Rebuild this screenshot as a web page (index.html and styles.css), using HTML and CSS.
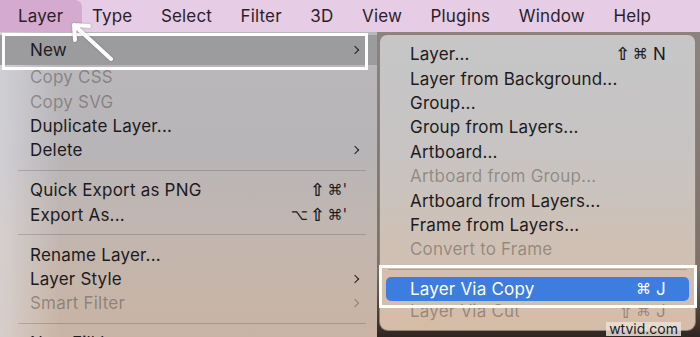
FILE: index.html
```html
<!DOCTYPE html>
<html lang="en">
<head>
    <meta charset="UTF-8">
    <meta name="viewport" content="width=device-width, initial-scale=1.0">
    <title>Layer &gt; New &gt; Layer Via Copy</title>
    <link rel="stylesheet" href="styles.css">
</head>
<body>
<div class="screen">

    <!-- Top menu bar -->
    <nav class="menubar">
        <div class="menubar-item open">Layer</div>
        <div class="menubar-item">Type</div>
        <div class="menubar-item">Select</div>
        <div class="menubar-item">Filter</div>
        <div class="menubar-item">3D</div>
        <div class="menubar-item">View</div>
        <div class="menubar-item">Plugins</div>
        <div class="menubar-item">Window</div>
        <div class="menubar-item">Help</div>
    </nav>

    <div class="menus">
        <!-- Layer menu -->
        <div class="menu main-menu">
            <div class="item item-new"><span>New</span><span></span><span class="chev"></span></div>
            <div class="item disabled"><span>Copy CSS</span></div>
            <div class="item disabled"><span>Copy SVG</span></div>
            <div class="item"><span>Duplicate Layer...</span></div>
            <div class="item"><span>Delete</span><span></span><span class="chev"></span></div>
            <div class="sep"></div>
            <div class="item"><span>Quick Export as PNG</span><span class="keys"><span class="shift">⇧</span>⌘'</span></div>
            <div class="item"><span>Export As...</span><span class="keys">⌥<span class="shift">⇧</span>⌘'</span></div>
            <div class="sep"></div>
            <div class="item"><span>Rename Layer...</span></div>
            <div class="item"><span>Layer Style</span><span></span><span class="chev"></span></div>
            <div class="item disabled"><span>Smart Filter</span><span></span><span class="chev"></span></div>
            <div class="sep"></div>
            <div class="item"><span>New Fill Layer</span><span></span><span class="chev"></span></div>
        </div>

        <!-- New submenu -->
        <div class="menu sub-menu">
            <div class="item"><span>Layer...</span><span class="keys"><span class="shift">⇧</span>⌘<span class="key-letter">N</span></span></div>
            <div class="item"><span>Layer from Background...</span></div>
            <div class="item"><span>Group...</span></div>
            <div class="item"><span>Group from Layers...</span></div>
            <div class="item"><span>Artboard...</span></div>
            <div class="item disabled"><span>Artboard from Group...</span></div>
            <div class="item"><span>Artboard from Layers...</span></div>
            <div class="item"><span>Frame from Layers...</span></div>
            <div class="item disabled"><span>Convert to Frame</span></div>
            <div class="sep"></div>
            <div class="item selected"><span>Layer Via Copy</span><span class="keys">⌘<span class="key-letter">J</span></span></div>
            <div class="item disabled last"><span>Layer Via Cut</span><span class="keys"><span class="shift">⇧</span>⌘<span class="key-letter">J</span></span></div>
        </div>
    </div>

    <!-- Tutorial annotations -->
    <div class="note note-new"></div>
    <div class="note note-copy"></div>
    <svg class="pointer" width="60" height="60" viewBox="0 0 60 60">
        <path d="M45 43 L8 9 M8 9 L9 24 M8 9 L23 10" stroke="#fff" stroke-width="4" stroke-linecap="round" stroke-linejoin="round" fill="none"/>
    </svg>
    <div class="watermark">wtvid.com</div>
</div>
</body>
</html>
```

FILE: styles.css
```css
/* Page */
body {
    margin: 0;
    font-family: Inter, "Liberation Sans", Arial, sans-serif;
    color: #1d1b1e;
}

.screen {
    width: 700px;
    height: 337px;
    overflow: hidden;
    position: relative;
    background: linear-gradient(180deg, #8f8680 0%, #7d7068 80%, #2f2520 100%);
}

/* Menu bar */
.menubar {
    display: flex;
    height: 32px;
    align-items: stretch;
    background: #e7cce5;
}
.menubar-item {
    display: flex;
    align-items: center;
    padding: 0 14.3px;
    font-size: 17px;
    letter-spacing: 0.15px;
    color: #2a1f29;
}
.menubar-item.open {
    background: #d4aad0;
    border-radius: 0 7px 7px 0;
    padding-left: 18px;
    padding-right: 19px;
    margin-right: -4.5px;
}

/* Menus */
.menus {
    display: flex;
    align-items: flex-start;
}
.menu {
    font-size: 17px;
    letter-spacing: 0.2px;
}
.main-menu {
    width: 377px;
    height: 305px;
    padding-top: 3px;
    box-sizing: border-box;
    background:
        linear-gradient(90deg, rgba(228, 228, 234, 0.55), rgba(228, 228, 234, 0) 60px),
        linear-gradient(180deg, #b9b8bb 0%, #b8b5b8 40%, #c2b6b0 65%, #c9b4a4 100%);
}
.sub-menu {
    width: 317px;
    height: 297px;
    margin: 2px 0 0 2px;
    padding-top: 7px;
    box-sizing: border-box;
    border-radius: 8px 8px 9px 9px;
    border: 1px solid rgba(60, 50, 45, 0.45);
    background: linear-gradient(180deg, #c6c6c7 0%, #c7c4c3 40%, #d0c0b3 75%, #d6bca7 100%);
}

.item {
    display: grid;
    grid-template-columns: 1fr auto 14px;
    align-items: center;
    height: 24.4px;
    padding: 0 16px 0 30px;
    white-space: nowrap;
}
.item-new {
    height: 30px;
    background: #9c9c9e;
}
.sub-menu .item {
    padding: 0 29px 0 30px;
    grid-template-columns: 1fr auto;
}
.sub-menu .item.selected {
    margin: 0 6px;
    padding: 0 23px 0 24px;
    border-radius: 5px;
    background: #3c7ddf;
    color: #fff;
}
.sub-menu .item.last {
    height: 21px;
    line-height: 19px;
}
.item.disabled {
    color: rgba(40, 30, 25, 0.36);
}

/* Keyboard shortcuts */
.keys {
    display: flex;
    align-items: center;
    gap: 2px;
    font-family: "DejaVu Sans", sans-serif;
    font-size: 15px;
}
.shift {
    font-size: 18px;
    font-weight: 700;
    line-height: 16px;
}
.key-letter {
    font-family: Inter, sans-serif;
    font-size: 17px;
    margin-left: 3px;
}

.chev {
    justify-self: end;
    width: 5px;
    height: 5px;
    border-right: 1.7px solid currentColor;
    border-top: 1.7px solid currentColor;
    transform: rotate(45deg);
    margin-right: 3px;
}

.sep {
    height: 15.5px;
    display: flex;
    align-items: center;
    padding: 0 11px 0 18px;
}
.sep::before {
    content: "";
    flex: 1;
    height: 1px;
    background: rgba(0, 0, 0, 0.16);
}
.sub-menu .sep {
    padding: 0 8px;
}

/* Annotations drawn over the screenshot */
.note {
    position: absolute;
    border: 3px solid #fff;
    box-sizing: border-box;
}
.note-new {
    left: 2px;
    top: 33px;
    width: 366px;
    height: 37px;
}
.note-copy {
    left: 379px;
    top: 265px;
    width: 318px;
    height: 43px;
}
.pointer {
    position: absolute;
    left: 66px;
    top: 16px;
    filter: drop-shadow(0 0 1px rgba(0, 0, 0, 0.25));
}
.watermark {
    position: absolute;
    right: 19px;
    bottom: 1px;
    padding: 0 3px;
    font-size: 14px;
    line-height: 14px;
    color: #1a1a1a;
    background: rgba(232, 224, 216, 0.85);
}
```
